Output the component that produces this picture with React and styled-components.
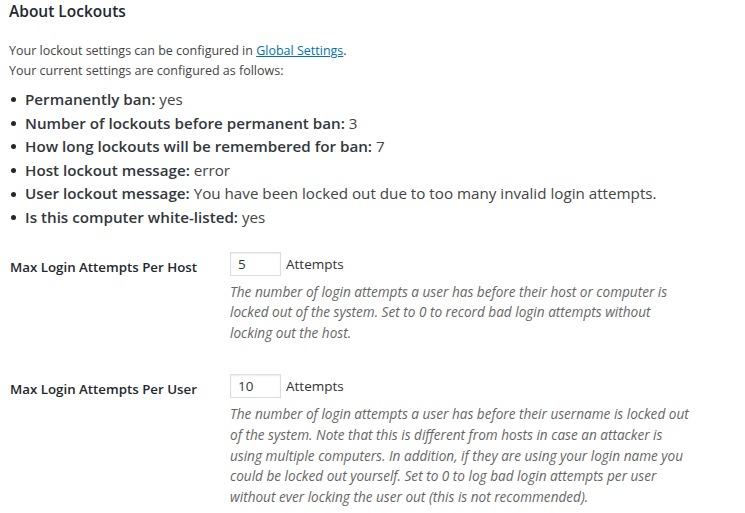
import React from 'react';
import styled, { createGlobalStyle } from 'styled-components';

const GlobalStyle = createGlobalStyle`
    body {
        margin: 0;
        background: #ffffff;
        font-family: 'Open Sans', 'Noto Sans', sans-serif;
        color: #444444;
    }
`

const Page = styled.div`
    padding: 0 0 0 9px;
`
const Heading = styled.h3`
    margin: 0;
    padding-top: 1px;
    font-size: 15.5px;
    font-weight: 600;
    line-height: 20px;
    color: #23282d;
`
const Intro = styled.p`
    margin: 20px 0 0;
    font-size: 12.5px;
    line-height: 19.5px;
    color: #444444;
`
const Link = styled.a`
    color: #0073aa;
    text-decoration: underline;
`
const List = styled.ul`
    list-style: none;
    margin: 8px 0 0;
    padding: 0;
`
const Item = styled.li`
    display: flex;
    align-items: center;
    gap: 9px;
    font-size: 15.2px;
    line-height: 23.6px;
    color: #444444;
`
const Dot = styled.span`
    width: 5px;
    height: 5px;
    margin-left: 2px;
    border-radius: 50%;
    background: #23282d;
    flex: none;
`
const Key = styled.span`
    font-weight: 600;
    color: #32373c;
`
const Form = styled.div`
    display: grid;
    grid-template-columns: 221px 1fr;
    row-gap: 29px;
    margin-top: 21px;
`
const Label = styled.div`
    padding-top: 6px;
    padding-left: 1px;
    font-size: 13.3px;
    font-weight: 600;
    line-height: 20px;
    color: #23282d;
`
const Field = styled.div`
    display: flex;
    flex-direction: column;
`
const InputRow = styled.div`
    display: flex;
    align-items: center;
    gap: 5px;
    padding-top: 1px;
    font-size: 13.5px;
    color: #333333;
`
const Input = styled.input`
    box-sizing: border-box;
    width: 51px;
    height: 24px;
    padding: 0 7px;
    border: 1px solid #dddddd;
    box-shadow: inset 0 1px 2px rgba(0, 0, 0, 0.07);
    font-family: 'Open Sans', sans-serif;
    font-size: 13.5px;
    color: #32373c;
    outline: none;
`
const Description = styled.p`
    margin: 6px 0 0;
    font-size: 13.6px;
    font-style: italic;
    line-height: 20.8px;
    color: #666666;
    white-space: nowrap;
`

const settings = [
    ['Permanently ban:', 'yes'],
    ['Number of lockouts before permanent ban:', '3'],
    ['How long lockouts will be remembered for ban:', '7'],
    ['Host lockout message:', 'error'],
    ['User lockout message:', 'You have been locked out due to too many invalid login attempts.'],
    ['Is this computer white-listed:', 'yes'],
]

const fields = [
    {
        label: 'Max Login Attempts Per Host',
        value: '5',
        lines: [
            'The number of login attempts a user has before their host or computer is',
            'locked out of the system. Set to 0 to record bad login attempts without',
            'locking out the host.',
        ],
    },
    {
        label: 'Max Login Attempts Per User',
        value: '10',
        lines: [
            'The number of login attempts a user has before their username is locked out',
            'of the system. Note that this is different from hosts in case an attacker is',
            'using multiple computers. In addition, if they are using your login name you',
            'could be locked out yourself. Set to 0 to log bad login attempts per user',
            'without ever locking the user out (this is not recommended).',
        ],
    },
]

const App = () => {
    return (
        <Page>
            <GlobalStyle />
            <Heading>About Lockouts</Heading>
            <Intro>
                Your lockout settings can be configured in <Link href="#">Global Settings</Link>.<br />
                Your current settings are configured as follows:
            </Intro>
            <List>
                {settings.map(([key, value]) => (
                    <Item key={key}>
                        <Dot />
                        <span><Key>{key}</Key> {value}</span>
                    </Item>
                ))}
            </List>
            <Form>
                {fields.map((f) => (
                    <React.Fragment key={f.label}>
                        <Label>{f.label}</Label>
                        <Field>
                            <InputRow>
                                <Input type="text" defaultValue={f.value} />
                                Attempts
                            </InputRow>
                            <Description>
                                {f.lines.map((line, i) => (
                                    <React.Fragment key={i}>
                                        {line}
                                        {i < f.lines.length - 1 && <br />}
                                    </React.Fragment>
                                ))}
                            </Description>
                        </Field>
                    </React.Fragment>
                ))}
            </Form>
        </Page>
    )
}

export default App
